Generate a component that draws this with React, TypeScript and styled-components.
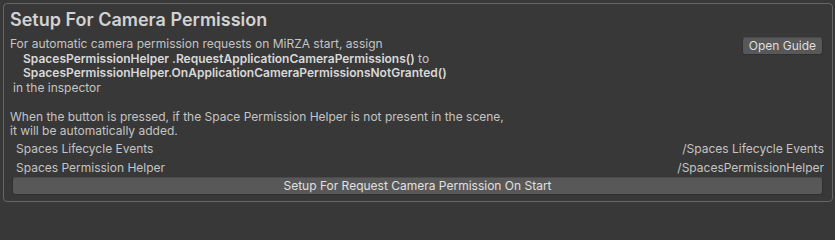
import React from "react";
import styled, { createGlobalStyle } from "styled-components";

const GlobalStyle = createGlobalStyle`
  html, body {
    margin: 0;
    padding: 0;
    background: #383838;
  }
  body {
    font-family: Inter, "Noto Sans", "Liberation Sans", sans-serif;
    font-size: 12px;
    color: #c4c4c4;
  }
`;

const Panel = styled.div`
  margin: 3px 2px 0 3px;
  border: 1px solid #666666;
  border-radius: 4px;
  padding: 4px 9px 6px 6px;
  background: #383838;
`;

const Title = styled.h2`
  margin: 1px 0 6px;
  font-size: 18px;
  line-height: 22px;
  font-weight: 600;
  color: #d2d2d2;
`;

const HelpRow = styled.div`
  display: flex;
  justify-content: space-between;
  align-items: flex-start;
`;

const HelpText = styled.div`
  display: flex;
  flex-direction: column;
`;

const Line = styled.div<{ $indent?: number; $bold?: boolean }>`
  height: 14.5px;
  line-height: 14.5px;
  white-space: nowrap;
  padding-left: ${(p) => p.$indent ?? 0}px;
  font-weight: ${(p) => (p.$bold ? 600 : 400)};
  color: ${(p) => (p.$bold ? "#d8d8d8" : "#c4c4c4")};
`;

const SmallButton = styled.button`
  height: 18px;
  padding: 0 6px;
  border: 1px solid #303030;
  border-top-color: #4a4a4a;
  border-radius: 3px;
  background: #585858;
  color: #dedede;
  font: inherit;
  line-height: 16px;
`;

const FieldRow = styled.div`
  display: flex;
  justify-content: space-between;
  height: 19px;
  line-height: 19px;
  padding: 0 0 0 6px;
`;

const FieldValue = styled.span`
  margin-right: -1px;
`;

const WideButton = styled(SmallButton)`
  display: block;
  width: calc(100% - 2px);
  margin: 0 0 0 2px;
  text-align: center;
  color: #e0e0e0;
`;

const help = [
  { text: "For automatic camera permission requests on MiRZA start, assign" },
  { text: "SpacesPermissionHelper .RequestApplicationCameraPermissions()", tail: " to", indent: 13, bold: true },
  { text: "SpacesPermissionHelper.OnApplicationCameraPermissionsNotGranted()", indent: 13, bold: true },
  { text: "in the inspector", indent: 3 },
  { text: "" },
  { text: "When the button is pressed, if the Space Permission Helper is not present in the scene," },
  { text: "it will be automatically added." },
];

const fields = [
  { label: "Spaces Lifecycle Events", value: "/Spaces Lifecycle Events" },
  { label: "Spaces Permission Helper", value: "/SpacesPermissionHelper" },
];

const Plain = styled.span`
  font-weight: 400;
  color: #c4c4c4;
`;

const App: React.FC = () => {
  return (
    <>
      <GlobalStyle />
      <Panel>
        <Title>Setup For Camera Permission</Title>
        <HelpRow>
          <HelpText>
            {help.map((l, i) => (
              <Line key={i} $indent={l.indent} $bold={l.bold}>
                {l.text}
                {l.tail && <Plain>{l.tail}</Plain>}
              </Line>
            ))}
          </HelpText>
          <SmallButton>Open Guide</SmallButton>
        </HelpRow>
        {fields.map((f) => (
          <FieldRow key={f.label}>
            <span>{f.label}</span>
            <FieldValue>{f.value}</FieldValue>
          </FieldRow>
        ))}
        <WideButton>Setup For Request Camera Permission On Start</WideButton>
      </Panel>
    </>
  );
};

export default App;
